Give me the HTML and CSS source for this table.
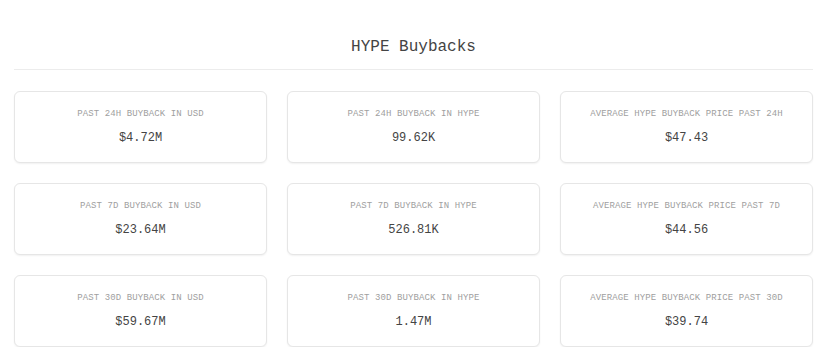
FILE: index.html
```html
<!DOCTYPE html>
<html>
<head>
<meta charset="utf-8">
<link rel="stylesheet" href="styles.css">
</head>
<body>
<div class="page">
  <h1 class="title">HYPE Buybacks</h1>
  <div class="grid">
    <div class="card"><div class="label">PAST 24H BUYBACK IN USD</div><div class="value">$4.72M</div></div>
    <div class="card"><div class="label">PAST 24H BUYBACK IN HYPE</div><div class="value">99.62K</div></div>
    <div class="card"><div class="label">AVERAGE HYPE BUYBACK PRICE PAST 24H</div><div class="value">$47.43</div></div>
    <div class="card"><div class="label">PAST 7D BUYBACK IN USD</div><div class="value">$23.64M</div></div>
    <div class="card"><div class="label">PAST 7D BUYBACK IN HYPE</div><div class="value">526.81K</div></div>
    <div class="card"><div class="label">AVERAGE HYPE BUYBACK PRICE PAST 7D</div><div class="value">$44.56</div></div>
    <div class="card"><div class="label">PAST 30D BUYBACK IN USD</div><div class="value">$59.67M</div></div>
    <div class="card"><div class="label">PAST 30D BUYBACK IN HYPE</div><div class="value">1.47M</div></div>
    <div class="card"><div class="label">AVERAGE HYPE BUYBACK PRICE PAST 30D</div><div class="value">$39.74</div></div>
  </div>
</div>
</body>
</html>
```
FILE: styles.css
```css
* { box-sizing: border-box; }
html, body { margin: 0; padding: 0; background: #ffffff; }
body { font-family: "Liberation Mono", "DejaVu Sans Mono", monospace; color: #333; }
.page { padding: 37px 12px 0 14px; }
.title {
  margin: 0;
  font-size: 16px;
  line-height: 20px;
  font-weight: normal;
  text-align: center;
  color: #444;
  padding-bottom: 12px;
  border-bottom: 1px solid #ececec;
}
.grid {
  margin-top: 21px;
  display: grid;
  grid-template-columns: repeat(3, 1fr);
  column-gap: 20px;
  row-gap: 20px;
}
.card {
  height: 72px;
  border: 1px solid #e6e6e6;
  border-radius: 6px;
  box-shadow: 0 1px 2px rgba(0,0,0,0.06);
  display: flex;
  flex-direction: column;
  align-items: center;
  justify-content: center;
  gap: 10px;
  background: #fff;
}
.label {
  font-size: 9px;
  line-height: 11px;
  color: #a0a0a0;
  letter-spacing: 0.1px;
}
.value {
  font-size: 12px;
  line-height: 16px;
  color: #444;
}
```
